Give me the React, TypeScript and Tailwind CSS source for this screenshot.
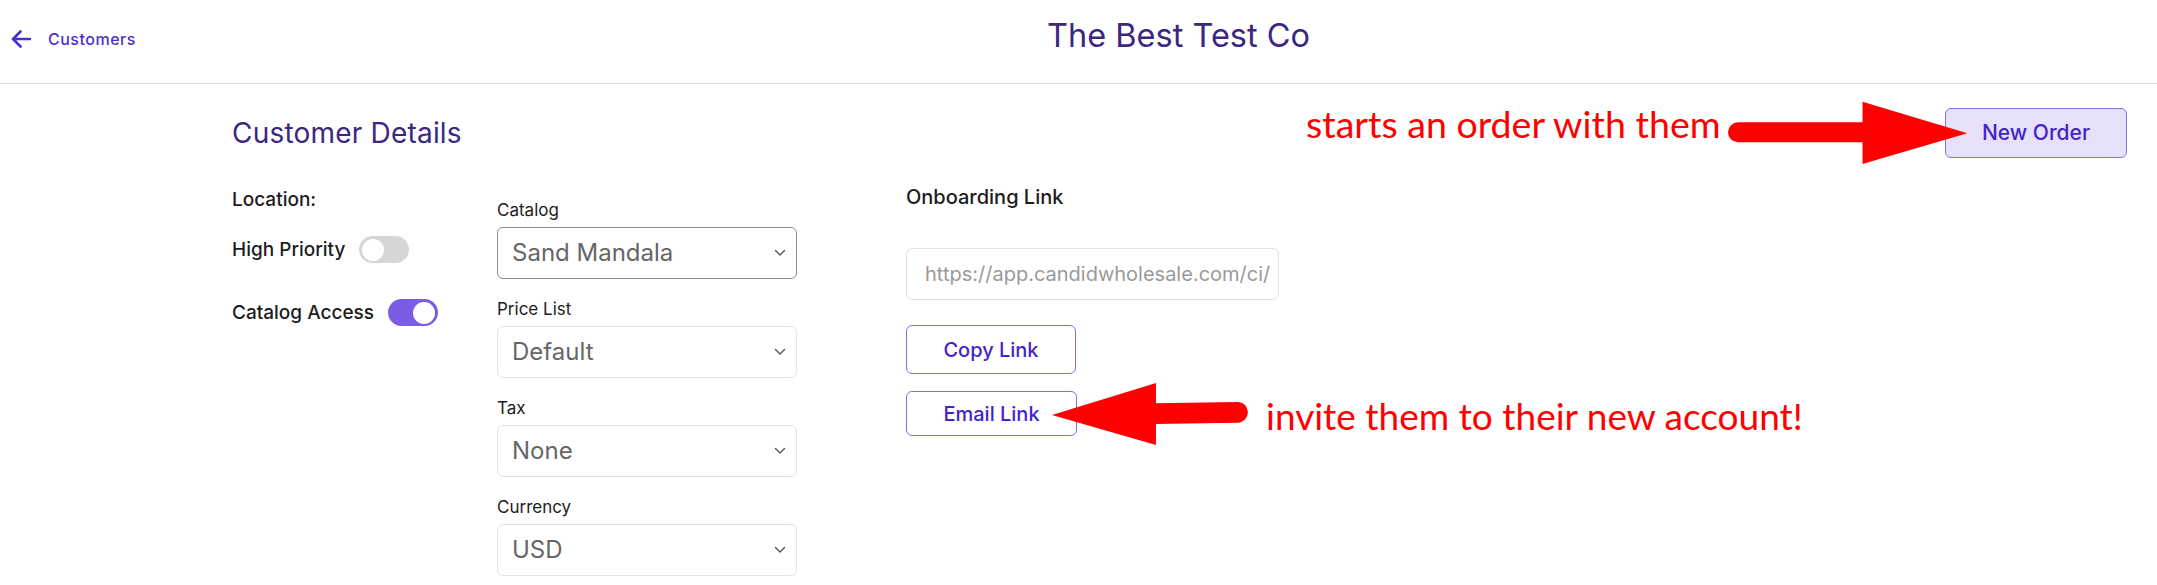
import React from 'react';

const ui = "font-['Inter',sans-serif]";

const Toggle: React.FC<{ on?: boolean }> = ({ on }) => (
  <div
    className={`ml-[14px] flex h-[27px] w-[50px] items-center rounded-full px-[3px] ${
      on ? 'justify-end bg-[#7b5ce5]' : 'justify-start bg-[#d6d6d6]'
    }`}
  >
    <div className="h-[22px] w-[22px] rounded-full bg-white" />
  </div>
);

const Chevron = () => (
  <svg width="12" height="8" viewBox="0 0 12 8" fill="none" className="shrink-0">
    <path d="M1.5 1.5 6 6l4.5-4.5" stroke="#555" strokeWidth="1.4" strokeLinecap="round" strokeLinejoin="round" />
  </svg>
);

interface FieldProps {
  label: string;
  value: string;
  focused?: boolean;
}

const SelectField: React.FC<FieldProps> = ({ label, value, focused }) => (
  <div className="mb-[19px]">
    <div className="text-[17px] leading-[22px] text-[#1c1c1c]">{label}</div>
    <div
      className={`mt-[6px] flex h-[52px] w-[300px] items-center justify-between rounded-[6px] border bg-white pl-[14px] pr-[10px] ${
        focused ? 'border-[#8c8c8c]' : 'border-[#e4e4e4]'
      }`}
    >
      <span className="text-2xl text-[#666]">{value}</span>
      <Chevron />
    </div>
  </div>
);

const App: React.FC = () => {
  return (
    <div className={`relative h-[585px] w-full overflow-hidden bg-white ${ui}`}>
      {/* header */}
      <header className="grid h-[84px] grid-cols-[200px_1fr] items-center border-b border-[#dcdcdc] pb-[12px]">
        <a className="mt-[6px] flex items-center gap-[17px] pl-[11px] text-[#4a2fd0]">
          <svg width="20" height="18" viewBox="0 0 20 18" fill="none">
            <path d="M9.5 1.5 2 9l7.5 7.5M2 9h17" stroke="currentColor" strokeWidth="2.6" strokeLinecap="round" strokeLinejoin="round" />
          </svg>
          <span className="text-base font-medium leading-5 tracking-[0.5px]">Customers</span>
        </a>
        <h1 className="text-center text-[32.5px] leading-[40px] text-[#3b2782]">The Best Test Co</h1>
      </header>

      <main className="pl-[232px] pr-[30px]">
        <div className="flex items-center justify-between pt-[24px]">
          <h2 className="text-[28px] leading-[34px] tracking-[0.2px] text-[#3b2782]">Customer Details</h2>
          <button className="h-[50px] w-[182px] rounded-[6px] border border-[#8470ea] bg-[#e6e0f9] text-[21px] font-medium text-[#4424c9]">
            New Order
          </button>
        </div>

        <div className="mt-[22px] flex items-start">
          {/* switches */}
          <div className="w-[265px] pt-[8px] text-[19px] font-medium text-[#1c1c1c]">
            <div className="leading-6">Location:</div>
            <div className="mt-[24px] flex h-[27px] items-center leading-6">
              High Priority
              <Toggle />
            </div>
            <div className="mt-[36px] flex h-[27px] items-center leading-6">
              Catalog Access
              <Toggle on />
            </div>
          </div>

          {/* selects */}
          <div className="w-[300px] pt-[19px]">
            <SelectField label="Catalog" value="Sand Mandala" focused />
            <SelectField label="Price List" value="Default" />
            <SelectField label="Tax" value="None" />
            <SelectField label="Currency" value="USD" />
          </div>

          {/* onboarding */}
          <div className="ml-[109px] flex flex-col items-start pt-[5px]">
            <div className="text-[20px] font-medium leading-6 text-[#1c1c1c]">Onboarding Link</div>
            <input
              readOnly
              value="https://app.candidwholesale.com/ci/"
              className="mt-[39px] h-[52px] w-[373px] rounded-[6px] border border-[#e2e2e2] pl-[18px] text-xl text-[#999] outline-none"
            />
            <button className="mt-[25px] h-[49px] w-[170px] rounded-[6px] border border-[#7f6be8] text-[20px] font-medium text-[#4424c9]">
              Copy Link
            </button>
            <button className="mt-[17px] h-[45px] w-[171px] rounded-[6px] border border-[#7f6be8] text-[20px] font-medium text-[#4424c9]">
              Email Link
            </button>
          </div>
        </div>
      </main>

      {/* annotations drawn over the page */}
      <svg className="pointer-events-none absolute left-0 top-0" width="2157" height="585" viewBox="0 0 2157 585">
        <path d="M1738 122.3H1864V142.3H1738A10 10 0 0 1 1738 122.3Z" fill="#ff0000" />
        <polygon points="1862.5,101.7 1967.3,133.3 1862.5,164" fill="#ff0000" />
        <polygon points="1052,415 1156,383 1156,445" fill="#ff0000" />
        <path d="M1154 403.3L1238.5 402A10.4 10.4 0 0 1 1238.5 422.7L1154 424Z" fill="#ff0000" />
      </svg>
      <div className="pointer-events-none absolute left-[1306px] top-[105px] font-['Lato',sans-serif] text-[37.5px] leading-none text-[#ff0000]">
        starts an order with them
      </div>
      <div className="pointer-events-none absolute left-[1266px] top-[397px] font-['Lato',sans-serif] text-[37px] leading-none text-[#ff0000]">
        invite them to their new account!
      </div>
    </div>
  );
};

export default App;
